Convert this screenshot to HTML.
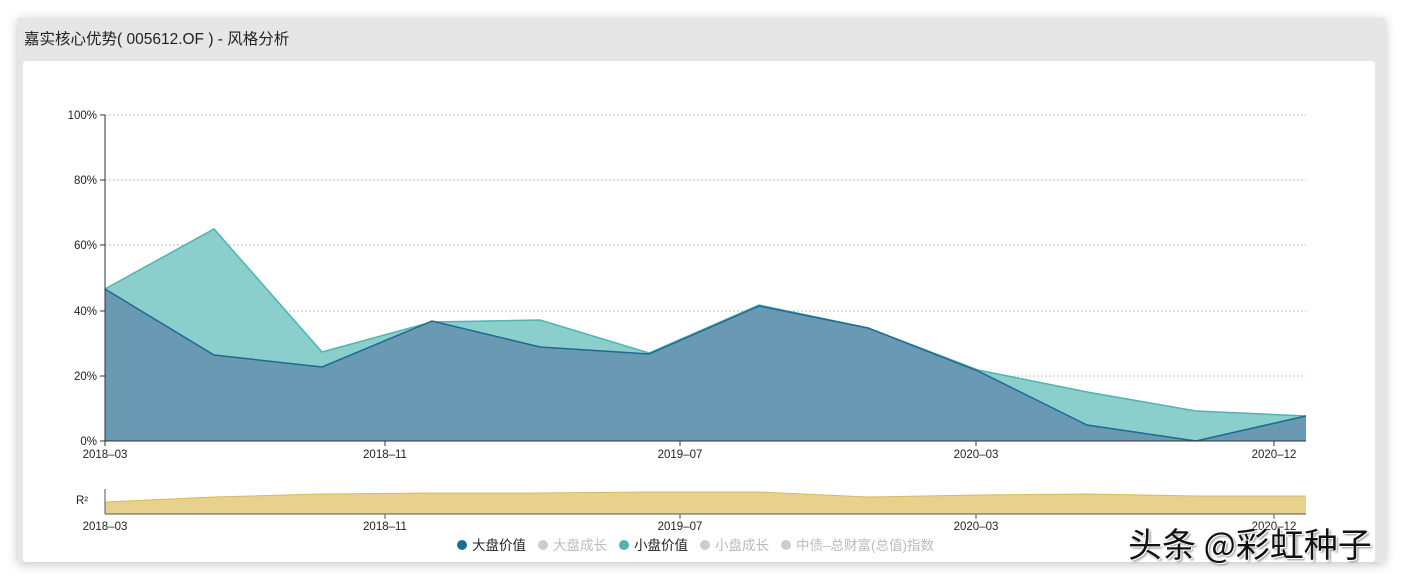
<!DOCTYPE html>
<html><head><meta charset="utf-8"><style>
body{margin:0;width:1403px;height:578px;background:#fff;overflow:hidden;font-family:"Liberation Sans","Noto Sans CJK SC",sans-serif;position:relative}
.card{position:absolute;left:18px;top:18px;width:1367px;height:544px;background:#e6e6e6;box-shadow:0 2px 10px rgba(0,0,0,.25)}
.title{position:absolute;left:6px;top:9px;font-size:15.5px;color:#222}
.panel{position:absolute;left:5px;top:43px;width:1352px;height:501px;background:#fff;border-radius:3px}
svg{position:absolute;left:0;top:0}
.wm{position:absolute;left:1128px;top:518px;font-size:34px;color:#111;font-family:"Noto Sans CJK SC",sans-serif;text-shadow:1px 1px 0 #fff,-1px -1px 0 #fff,2px 2px 2px #888}
</style></head><body>
<div class="card"><div class="title">嘉实核心优势( 005612.OF ) - 风格分析</div><div class="panel"></div></div>
<svg width="1403" height="578" font-family="Liberation Sans, Noto Sans CJK SC, sans-serif" font-size="11.5">
<g stroke="#bbb" stroke-dasharray="2,2">
<line x1="105" y1="115" x2="1306" y2="115"/><line x1="105" y1="180" x2="1306" y2="180"/><line x1="105" y1="245" x2="1306" y2="245"/><line x1="105" y1="311" x2="1306" y2="311"/><line x1="105" y1="376" x2="1306" y2="376"/>
</g>
<polygon fill="#8acfcb" points="105,441 105,289 214,229 322,352 432,322 540,320 649,353 759,305 868,328 978,370 1087,392 1196,411 1306,416 1306,441"/>
<polyline fill="none" stroke="#4fb4b2" stroke-width="1.5" points="105,289 214,229 322,352 432,322 540,320 649,353 759,305 868,328 978,370 1087,392 1196,411 1306,416"/>
<polygon fill="#6a99b3" points="105,441 105,289 214,355 322,367 432,321 540,347 649,354 759,306 868,328 978,371 1087,425 1196,441 1306,416 1306,441"/>
<polyline fill="none" stroke="#1f6a92" stroke-width="1.5" points="105,289 214,355 322,367 432,321 540,347 649,354 759,306 868,328 978,371 1087,425 1196,441 1306,416"/>
<g stroke="#333"><line x1="105" y1="115" x2="105" y2="441"/><line x1="105" y1="441" x2="1306" y2="441"/>
<line x1="100" y1="115" x2="105" y2="115"/><line x1="100" y1="180" x2="105" y2="180"/><line x1="100" y1="245" x2="105" y2="245"/><line x1="100" y1="311" x2="105" y2="311"/><line x1="100" y1="376" x2="105" y2="376"/><line x1="100" y1="441" x2="105" y2="441"/>
<line x1="105" y1="441" x2="105" y2="446"/><line x1="385" y1="441" x2="385" y2="446"/><line x1="680" y1="441" x2="680" y2="446"/><line x1="976" y1="441" x2="976" y2="446"/><line x1="1274" y1="441" x2="1274" y2="446"/></g>
<g text-anchor="end" fill="#222"><text x="97" y="119">100%</text><text x="97" y="184">80%</text><text x="97" y="249">60%</text><text x="97" y="315">40%</text><text x="97" y="380">20%</text><text x="97" y="445">0%</text></g>
<g text-anchor="middle" fill="#222"><text x="105" y="458">2018–03</text><text x="385" y="458">2018–11</text><text x="680" y="458">2019–07</text><text x="976" y="458">2020–03</text><text x="1274" y="458">2020–12</text>
<text x="105" y="530">2018–03</text><text x="385" y="530">2018–11</text><text x="680" y="530">2019–07</text><text x="976" y="530">2020–03</text><text x="1274" y="530">2020–12</text></g>
<polygon fill="#e8d18c" points="105,514 105,502 214,497 322,494 432,493 540,493 650,492 759,492 868,497 978,495 1087,494 1196,496 1306,496 1306,514"/>
<polyline fill="none" stroke="#d8b860" points="105,502 214,497 322,494 432,493 540,493 650,492 759,492 868,497 978,495 1087,494 1196,496 1306,496"/>
<g stroke="#555"><line x1="105" y1="489" x2="105" y2="514"/><line x1="105" y1="514" x2="1306" y2="514"/><line x1="385" y1="514" x2="385" y2="519"/><line x1="680" y1="514" x2="680" y2="519"/><line x1="976" y1="514" x2="976" y2="519"/><line x1="1274" y1="514" x2="1274" y2="519"/></g>
<text x="76" y="504" fill="#222">R²</text>
<g font-size="13.5"><circle cx="462" cy="545" r="5" fill="#1f6a92"/><text x="472" y="550" fill="#222">大盘价值</text>
<circle cx="543" cy="545" r="5" fill="#ccc"/><text x="553" y="550" fill="#bbb">大盘成长</text>
<circle cx="624" cy="545" r="5" fill="#4fb4b2"/><text x="634" y="550" fill="#222">小盘价值</text>
<circle cx="705" cy="545" r="5" fill="#ccc"/><text x="715" y="550" fill="#bbb">小盘成长</text>
<circle cx="786" cy="545" r="5" fill="#ccc"/><text x="796" y="550" fill="#bbb">中债–总财富(总值)指数</text></g>
</svg>
<div class="wm">头条 @彩虹种子</div>
</body></html>
